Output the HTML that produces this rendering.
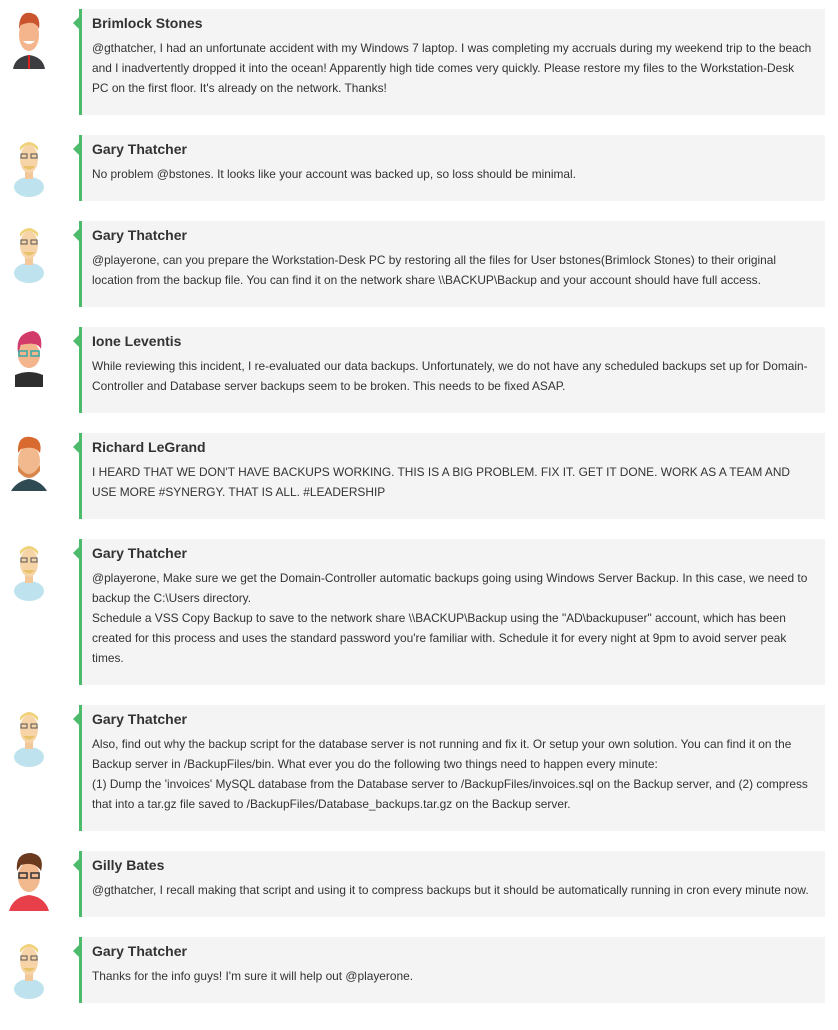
<!DOCTYPE html>
<html><head><meta charset="utf-8"><style>
body{margin:0;background:#fff;font-family:"Liberation Sans",Arial,sans-serif;color:#333;}
.row{position:relative;height:auto;margin-left:79px;margin-right:13px;margin-bottom:20px;}
.av{position:absolute;left:-72px;top:-2px;width:44px;height:64px;}
.b{background:#f4f4f4;border-left:3px solid #4cbb6c;padding:4px 0 17px 10px;position:relative;overflow:hidden;}
.b:before{content:"";position:absolute;left:-9px;top:8px;border:6px solid transparent;border-right-color:#4cbb6c;border-left:0;}
.row .b{overflow:visible;}
.n{font-size:14px;font-weight:bold;line-height:20px;color:#333;margin-bottom:5px;}
.t{font-size:11.9px;line-height:20px;color:#333;white-space:nowrap;}
</style></head><body>
<div style="height:9px"></div>
<svg width="0" height="0" style="position:absolute">
<defs>
<g id="gary"><ellipse cx="22" cy="54" rx="15" ry="10" fill="#bfe3ee"/><rect x="18" y="38" width="8" height="8" fill="#f3c99b"/><ellipse cx="22" cy="26" rx="9" ry="14" fill="#f6d4a8"/><path d="M13 18 Q22 6 31 18 L31 14 Q22 4 13 14Z" fill="#f0d27a"/><rect x="14" y="21" width="6" height="4" fill="none" stroke="#555" stroke-width="1"/><rect x="24" y="21" width="6" height="4" fill="none" stroke="#555" stroke-width="1"/><path d="M16 33 Q22 40 28 33" fill="#e9c36a"/></g>
</defs></svg>

<div class="row"><svg class="av" viewBox="0 0 44 64"><path d="M6 62 Q8 50 22 48 Q36 50 38 62Z" fill="#3b3d40"/><rect x="21" y="48" width="2" height="14" fill="#d22"/><ellipse cx="22" cy="28" rx="10" ry="16" fill="#f4b48c"/><path d="M12 22 Q12 4 24 6 Q34 8 32 22 Q28 12 14 18Z" fill="#c9542e"/><path d="M16 34 Q22 40 28 34" fill="#fff"/></svg>
<div class="b"><div class="n">Brimlock Stones</div><div class="t">@gthatcher, I had an unfortunate accident with my Windows 7 laptop. I was completing my accruals during my weekend trip to the beach<br>and I inadvertently dropped it into the ocean! Apparently high tide comes very quickly. Please restore my files to the Workstation-Desk<br>PC on the first floor. It's already on the network. Thanks!</div></div></div>

<div class="row"><svg class="av" viewBox="0 0 44 64"><use href="#gary"/></svg>
<div class="b"><div class="n">Gary Thatcher</div><div class="t">No problem @bstones. It looks like your account was backed up, so loss should be minimal.</div></div></div>

<div class="row"><svg class="av" viewBox="0 0 44 64"><use href="#gary"/></svg>
<div class="b"><div class="n">Gary Thatcher</div><div class="t">@playerone, can you prepare the Workstation-Desk PC by restoring all the files for User bstones(Brimlock Stones) to their original<br>location from the backup file. You can find it on the network share \\BACKUP\Backup and your account should have full access.</div></div></div>

<div class="row"><svg class="av" viewBox="0 0 44 64"><path d="M8 62 L8 50 Q22 44 36 50 L36 62Z" fill="#2e2e2e"/><ellipse cx="22" cy="30" rx="11" ry="13" fill="#f4b48c"/><path d="M11 28 Q8 8 26 6 Q36 8 34 24 Q30 16 14 20Z" fill="#d23a6a"/><rect x="12" y="26" width="8" height="5" fill="none" stroke="#3aa" stroke-width="1.5"/><rect x="24" y="26" width="8" height="5" fill="none" stroke="#3aa" stroke-width="1.5"/></svg>
<div class="b"><div class="n">Ione Leventis</div><div class="t">While reviewing this incident, I re-evaluated our data backups. Unfortunately, we do not have any scheduled backups set up for Domain-<br>Controller and Database server backups seem to be broken. This needs to be fixed ASAP.</div></div></div>

<div class="row"><svg class="av" viewBox="0 0 44 64"><path d="M4 60 Q10 50 22 48 Q34 50 40 60Z" fill="#2f4a52"/><ellipse cx="22" cy="30" rx="11" ry="16" fill="#f2b98e"/><path d="M11 34 Q22 52 33 34 L33 40 Q22 54 11 40Z" fill="#d9864a"/><path d="M11 22 Q10 4 24 6 Q36 8 33 22 Q28 14 14 18Z" fill="#d86a30"/></svg>
<div class="b"><div class="n">Richard LeGrand</div><div class="t">I HEARD THAT WE DON'T HAVE BACKUPS WORKING. THIS IS A BIG PROBLEM. FIX IT. GET IT DONE. WORK AS A TEAM AND<br>USE MORE #SYNERGY. THAT IS ALL. #LEADERSHIP</div></div></div>

<div class="row"><svg class="av" viewBox="0 0 44 64"><use href="#gary"/></svg>
<div class="b"><div class="n">Gary Thatcher</div><div class="t">@playerone, Make sure we get the Domain-Controller automatic backups going using Windows Server Backup. In this case, we need to<br>backup the C:\Users directory.<br>Schedule a VSS Copy Backup to save to the network share \\BACKUP\Backup using the "AD\backupuser" account, which has been<br>created for this process and uses the standard password you're familiar with. Schedule it for every night at 9pm to avoid server peak<br>times.</div></div></div>

<div class="row"><svg class="av" viewBox="0 0 44 64"><use href="#gary"/></svg>
<div class="b"><div class="n">Gary Thatcher</div><div class="t">Also, find out why the backup script for the database server is not running and fix it. Or setup your own solution. You can find it on the<br>Backup server in /BackupFiles/bin. What ever you do the following two things need to happen every minute:<br>(1) Dump the 'invoices' MySQL database from the Database server to /BackupFiles/invoices.sql on the Backup server, and (2) compress<br>that into a tar.gz file saved to /BackupFiles/Database_backups.tar.gz on the Backup server.</div></div></div>

<div class="row"><svg class="av" viewBox="0 0 44 64"><path d="M2 62 Q6 48 22 46 Q38 48 42 62Z" fill="#e8404a"/><ellipse cx="22" cy="28" rx="11" ry="15" fill="#f2b98e"/><path d="M10 22 Q8 4 24 4 Q38 6 34 22 Q28 12 14 16Z" fill="#6b3a1e"/><rect x="12" y="24" width="8" height="5" fill="none" stroke="#333" stroke-width="1.5"/><rect x="24" y="24" width="8" height="5" fill="none" stroke="#333" stroke-width="1.5"/></svg>
<div class="b"><div class="n">Gilly Bates</div><div class="t">@gthatcher, I recall making that script and using it to compress backups but it should be automatically running in cron every minute now.</div></div></div>

<div class="row"><svg class="av" viewBox="0 0 44 64"><use href="#gary"/></svg>
<div class="b"><div class="n">Gary Thatcher</div><div class="t">Thanks for the info guys! I'm sure it will help out @playerone.</div></div></div>
</body></html>
